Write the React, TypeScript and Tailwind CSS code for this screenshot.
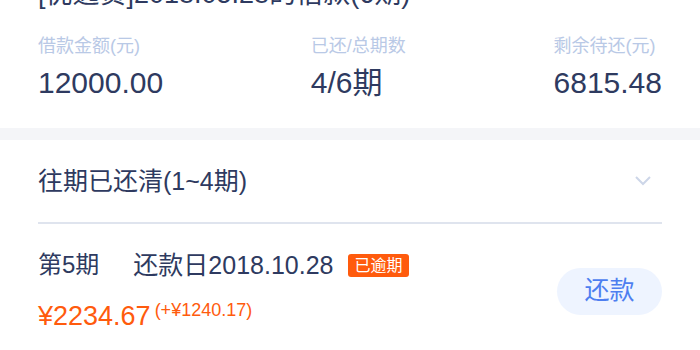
import React from "react";

const font = {
  fontFamily: '"Liberation Sans", "Noto Sans CJK SC", sans-serif',
};

const Stat = ({ label, value }: { label: string; value: string }) => (
  <div className="flex flex-col">
    <div className="text-[18px] leading-[24px] text-[#b9c9e6]">{label}</div>
    <div className="mt-[6px] text-[30px] leading-[38px] text-[#2e3a60]">{value}</div>
  </div>
);

export default function App() {
  return (
    <div className="h-[350px] w-[700px] overflow-hidden bg-white" style={font}>
      <section className="px-[38px] pb-[26px]">
        <div className="-mt-[22px] text-[27px] leading-[32px] text-[#2e3a60]">
          [优逸贷]2018.05.28的借款(6期)
        </div>
        <div className="mt-[24px] flex justify-between">
          <Stat label="借款金额(元)" value="12000.00" />
          <Stat label="已还/总期数" value="4/6期" />
          <Stat label="剩余待还(元)" value="6815.48" />
        </div>
      </section>

      <div className="h-[12px] bg-[#f4f5f8]" />

      <section className="px-[38px]">
        <div className="flex h-[84px] items-center justify-between border-b-2 border-[#dfe4ee]">
          <span className="mt-[2px] text-[25px] text-[#2e3a60]">往期已还清(1~4期)</span>
          <svg width="18" height="12" viewBox="0 0 18 12" className="mr-[10px]">
            <path d="M2 2l7 7 7-7" fill="none" stroke="#cdd6e8" strokeWidth="2" />
          </svg>
        </div>

        <div className="flex items-center justify-between pt-[25px]">
          <div className="flex flex-col">
            <div className="flex items-center text-[24px] leading-[32px] text-[#2e3a60]">
              <span>第5期</span>
              <span className="ml-[34px] text-[25px]">还款日2018.10.28</span>
              <span className="ml-[15px] rounded-[3px] bg-[#ff5b0d] px-[6px] text-[16px] leading-[23px] text-white">
                已逾期
              </span>
            </div>
            <div className="mt-[18px] flex items-start text-[#ff5b0d]">
              <span className="text-[27px] leading-[34px]">¥2234.67</span>
              <span className="ml-[4px] mt-[1px] text-[18px] leading-[20px]">(+¥1240.17)</span>
            </div>
          </div>
          <button className="h-[47px] w-[105px] rounded-full bg-[#eef4ff] text-[25px] text-[#4d7ef0]">
            还款
          </button>
        </div>
      </section>
    </div>
  );
}
